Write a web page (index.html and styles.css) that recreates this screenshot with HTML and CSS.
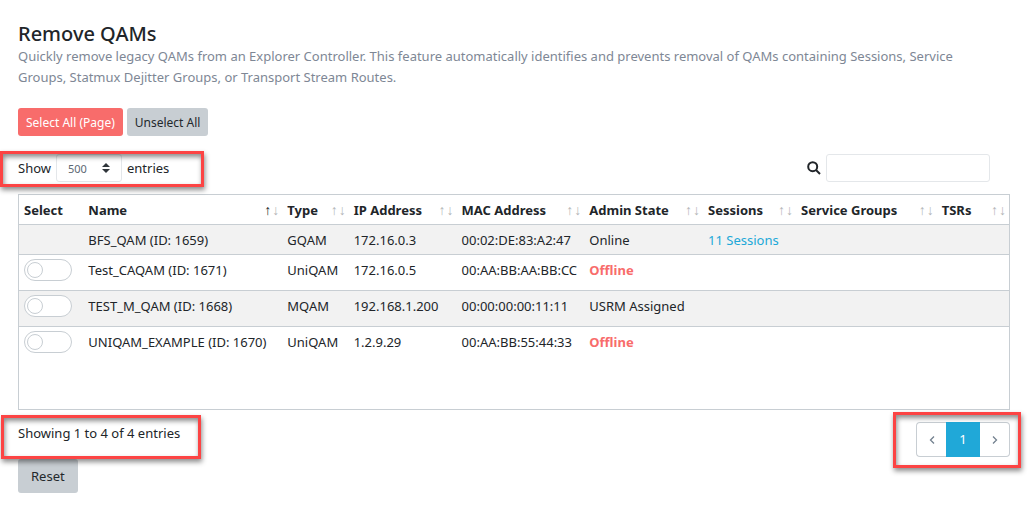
FILE: index.html
```
<!DOCTYPE html>
<html lang="en">
<head>
    <meta charset="UTF-8">
    <meta name="viewport" content="width=device-width, initial-scale=1.0">
    <title>Remove QAMs</title>
    <link rel="stylesheet" href="styles.css">
</head>

<body>

    <main class="page">
        <h1>Remove QAMs</h1>
        <p class="description">Quickly remove legacy QAMs from an Explorer Controller. This feature automatically identifies and prevents removal of QAMs containing Sessions, Service Groups, Statmux Dejitter Groups, or Transport Stream Routes.</p>

        <div class="actions">
            <button type="button" class="btn btn-sm btn-danger">Select All (Page)</button>
            <button type="button" class="btn btn-sm btn-secondary">Unselect All</button>
        </div>

        <div class="toolbar">
            <div class="length">
                <label for="page_length">Show</label>
                <div class="select-wrap">
                    <select id="page_length">
                        <option>500</option>
                    </select>
                    <svg class="select-arrows" viewBox="0 0 8 10"><path d="M4 0 8 4H0zM0 6h8L4 10z"/></svg>
                </div>
                <span>entries</span>
                <div class="callout callout-length"></div>
            </div>
            <div class="search">
                <label for="search" aria-label="Search">
                    <svg viewBox="0 0 14 14"><circle cx="5.7" cy="5.7" r="4.5"/><path d="M9 9l4 4"/></svg>
                </label>
                <input type="text" id="search">
            </div>
        </div>

        <div class="table-wrap">
            <table>
                <colgroup>
                    <col class="col-select">
                    <col class="col-name">
                    <col class="col-type">
                    <col class="col-ip">
                    <col class="col-mac">
                    <col class="col-state">
                    <col class="col-sessions">
                    <col class="col-groups">
                    <col class="col-tsrs">
                </colgroup>
                <thead>
                    <tr>
                        <th>Select</th>
                        <th class="sort sort-asc">Name</th>
                        <th class="sort">Type</th>
                        <th class="sort">IP Address</th>
                        <th class="sort">MAC Address</th>
                        <th class="sort">Admin State</th>
                        <th class="sort">Sessions</th>
                        <th class="sort">Service Groups</th>
                        <th class="sort">TSRs</th>
                    </tr>
                </thead>
                <tbody>
                    <tr>
                        <td></td>
                        <td>BFS_QAM (ID: 1659)</td>
                        <td>GQAM</td>
                        <td>172.16.0.3</td>
                        <td>00:02:DE:83:A2:47</td>
                        <td>Online</td>
                        <td><a href="#">11 Sessions</a></td>
                        <td></td>
                        <td></td>
                    </tr>
                    <tr>
                        <td><input type="checkbox" class="switch" aria-labelledby="qam_1671"></td>
                        <td id="qam_1671">Test_CAQAM (ID: 1671)</td>
                        <td>UniQAM</td>
                        <td>172.16.0.5</td>
                        <td>00:AA:BB:AA:BB:CC</td>
                        <td class="offline">Offline</td>
                        <td></td>
                        <td></td>
                        <td></td>
                    </tr>
                    <tr>
                        <td><input type="checkbox" class="switch" aria-labelledby="qam_1668"></td>
                        <td id="qam_1668">TEST_M_QAM (ID: 1668)</td>
                        <td>MQAM</td>
                        <td>192.168.1.200</td>
                        <td>00:00:00:00:11:11</td>
                        <td>USRM Assigned</td>
                        <td></td>
                        <td></td>
                        <td></td>
                    </tr>
                    <tr>
                        <td><input type="checkbox" class="switch" aria-labelledby="qam_1670"></td>
                        <td id="qam_1670">UNIQAM_EXAMPLE (ID: 1670)</td>
                        <td>UniQAM</td>
                        <td>1.2.9.29</td>
                        <td>00:AA:BB:55:44:33</td>
                        <td class="offline">Offline</td>
                        <td></td>
                        <td></td>
                        <td></td>
                    </tr>
                </tbody>
            </table>
        </div>

        <div class="footer">
            <div class="info">
                Showing 1 to 4 of 4 entries
                <div class="callout callout-info"></div>
            </div>
            <nav class="pagination">
                <a href="#" aria-label="Previous"><svg viewBox="0 0 6 8"><path d="M5 0.5 1.5 4 5 7.5"/></svg></a>
                <a href="#" class="active">1</a>
                <a href="#" aria-label="Next"><svg viewBox="0 0 6 8"><path d="M1 0.5 4.5 4 1 7.5"/></svg></a>
                <div class="callout callout-pages"></div>
            </nav>
        </div>

        <button type="button" class="btn btn-secondary">Reset</button>
    </main>

</body>
</html>
```
FILE: styles.css
```
*,
*::before,
*::after {
    box-sizing: border-box;
}
body {
    margin: 0;
    background-color: #fff;
    color: #212529;
    font-family: "Noto Sans", "Open Sans", sans-serif;
    font-size: 13px;
    line-height: 21px;
}
.page {
    padding: 22px 18px;
}
h1 {
    margin: 0;
    font-size: 20px;
    font-weight: 500;
    line-height: 24px;
}
.description {
    margin: 0 0 20px;
    padding-right: 20px;
    color: #7e8795;
}
a {
    color: #20a8d8;
    text-decoration: none;
}
.btn {
    height: 34px;
    padding: 0 13px;
    border: none;
    border-radius: 3px;
    font-family: inherit;
    font-size: 13px;
    cursor: pointer;
}
.btn-sm {
    height: 28px;
    padding: 0 8px;
    font-size: 12px;
}
.btn-danger {
    background-color: #f86c6b;
    color: #fff;
}
.btn-secondary {
    background-color: #c8ced3;
    color: #23282c;
}
.actions {
    display: flex;
    gap: 4px;
    margin-bottom: 18px;
}
.toolbar {
    display: flex;
    justify-content: space-between;
    align-items: center;
    margin-bottom: 12px;
    padding-right: 20px;
}
.length {
    position: relative;
    display: flex;
    align-items: center;
    gap: 5px;
    line-height: 20px;
}
.select-wrap {
    position: relative;
}
select {
    display: block;
    width: 66px;
    height: 28px;
    padding: 0 11px;
    appearance: none;
    border: 1px solid #e4e7ea;
    border-radius: 3px;
    background-color: #fff;
    color: #5c6873;
    font-family: inherit;
    font-size: 11px;
}
.select-arrows {
    position: absolute;
    top: 9px;
    right: 12px;
    width: 8px;
    height: 10px;
    fill: #2f353a;
    pointer-events: none;
}
.search {
    display: flex;
    align-items: center;
    gap: 5px;
}
.search svg {
    display: block;
    width: 14px;
    height: 14px;
    fill: none;
    stroke: #212529;
    stroke-width: 2;
}
.search input {
    width: 164px;
    height: 28px;
    padding: 0 8px;
    border: 1px solid #e4e7ea;
    border-radius: 3px;
    font-family: inherit;
    font-size: 11px;
}

/* table */
.table-wrap {
    min-height: 216px;
    border: 1px solid #c8ced3;
}
table {
    width: 100%;
    table-layout: fixed;
    border-collapse: separate;
    border-spacing: 0;
}
.col-select { width: 6.5%; }
.col-name { width: 20.1%; }
.col-type { width: 6.7%; }
.col-ip { width: 10.9%; }
.col-mac { width: 12.9%; }
.col-state { width: 12%; }
.col-sessions { width: 9.4%; }
.col-groups { width: 14.2%; }
.col-tsrs { width: 7.3%; }
th,
td {
    padding: 4px 5px 3px;
    border-bottom: 1px solid #c8ced3;
    line-height: 22px;
    text-align: left;
    vertical-align: top;
    white-space: nowrap;
}
th {
    font-weight: 700;
}
tbody tr:nth-child(odd) {
    background-color: #f2f2f2;
}
tbody tr:last-child td {
    border-bottom: none;
}
.sort {
    position: relative;
}
.sort::before,
.sort::after {
    position: absolute;
    top: 5px;
    color: #b4b6b8;
    font-family: "Liberation Serif", serif;
    font-size: 14px;
    font-weight: 400;
}
.sort::before {
    content: "↑";
    right: 11px;
}
.sort::after {
    content: "↓";
    right: 3px;
}
.sort-asc::before {
    color: #212529;
}
.offline {
    color: #f86c6b;
    font-weight: 700;
}
.switch {
    display: block;
    width: 48px;
    height: 22px;
    margin: 0 0 6px;
    padding: 2px;
    appearance: none;
    border: 1px solid #c8ced3;
    border-radius: 11px;
    background-color: #fff;
    cursor: pointer;
}
.switch::before {
    content: "";
    display: block;
    width: 16px;
    height: 16px;
    border: 1px solid #c8ced3;
    border-radius: 50%;
}
.switch:checked::before {
    margin-left: auto;
}

/* footer */
.footer {
    display: flex;
    justify-content: space-between;
    margin-bottom: 2px;
    padding-top: 12px;
}
.info {
    position: relative;
    align-self: flex-start;
    line-height: 22px;
}
.pagination {
    position: relative;
    display: flex;
}
.pagination a {
    display: flex;
    justify-content: center;
    align-items: center;
    width: 30px;
    height: 35px;
    border: 1px solid #c8ced3;
}
.pagination a:first-child {
    border-right: none;
    border-radius: 4px 0 0 4px;
}
.pagination a:nth-child(3) {
    border-left: none;
    border-radius: 0 4px 4px 0;
}
.pagination .active {
    width: 34px;
    border-color: #20a8d8;
    background-color: #20a8d8;
    color: #fff;
}
.pagination svg {
    width: 6px;
    height: 8px;
    fill: none;
    stroke: #73818f;
    stroke-width: 1.3;
}

/* red boxes over the parts being explained */
.callout {
    position: absolute;
    border: 3px solid #fc4444;
    box-shadow: 1px 3px 5px rgba(0, 0, 0, 0.45), inset 1px 3px 5px rgba(0, 0, 0, 0.45);
    pointer-events: none;
}
.callout-length {
    inset: -3px -35px -5px -18px;
}
.callout-info {
    inset: -7px -21px -15px -17px;
}
.callout-pages {
    inset: -10px -11px -11px -23px;
}
```
